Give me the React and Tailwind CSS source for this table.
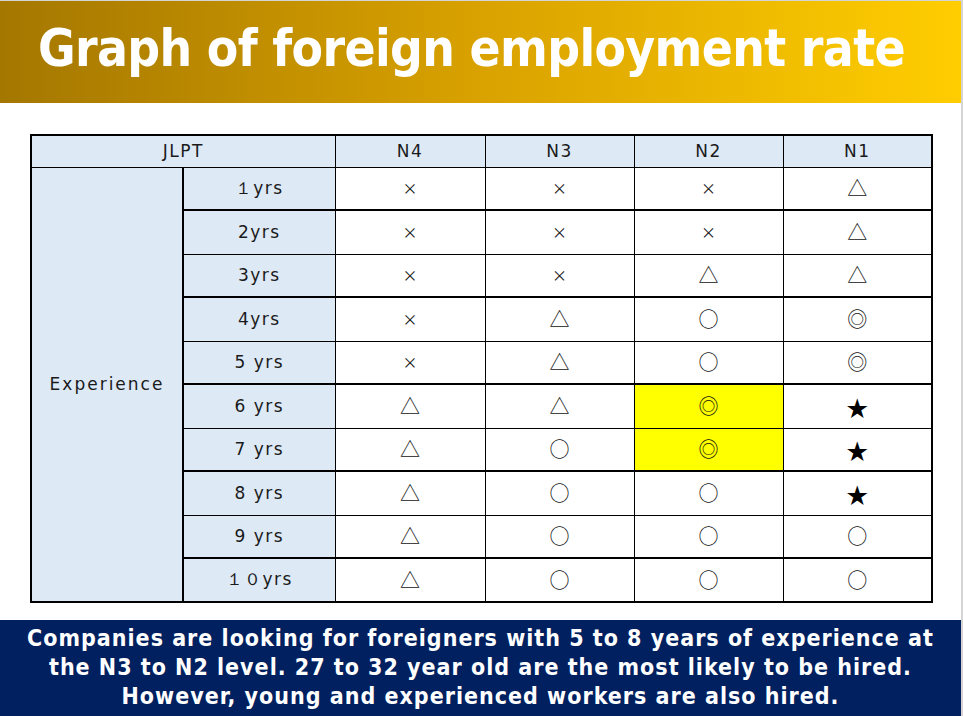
const COLS = ['N4', 'N3', 'N2', 'N1'];

const ROWS = [
  { label: '１yrs', marks: ['×', '×', '×', '△'] },
  { label: '2yrs', marks: ['×', '×', '×', '△'] },
  { label: '3yrs', marks: ['×', '×', '△', '△'] },
  { label: '4yrs', marks: ['×', '△', '○', '◎'] },
  { label: '5 yrs', marks: ['×', '△', '○', '◎'] },
  { label: '6 yrs', marks: ['△', '△', '◎', '★'], hot: 2 },
  { label: '7 yrs', marks: ['△', '○', '◎', '★'], hot: 2 },
  { label: '8 yrs', marks: ['△', '○', '○', '★'] },
  { label: '9 yrs', marks: ['△', '○', '○', '○'] },
  { label: '１０yrs', marks: ['△', '○', '○', '○'] },
];

const label = "font-['DejaVu_Sans',sans-serif] text-[17px] tracking-[1.5px] text-[#1a1a1a]";
const mark = "font-['Noto_Sans_CJK_JP',sans-serif] text-[#111]";

function Mark({ m }) {
  if (m === '×') return <span className={`${mark} text-[15px]`}>×</span>;
  if (m === '★') return <span className={`${mark} text-[22px] text-black`}>★</span>;
  return <span className={`${mark} text-[20px]`}>{m}</span>;
}

export default function App() {
  return (
    <div className="w-[963px] h-[716px] bg-white overflow-hidden flex flex-col border-t border-r-2 border-[#d4d4d4]">
      <div className="h-[102px] shrink-0 flex items-center pl-[38px] pb-[8px] bg-[linear-gradient(to_right,#a47700,#d9a200_50%,#ffcd00)]">
        <h1 className="font-['DejaVu_Sans_Condensed','DejaVu_Sans',sans-serif] font-bold text-white text-[51px] tracking-[-0.65px] leading-none">
          Graph of foreign employment rate
        </h1>
      </div>

      <div className="pt-[31px] pl-[30px]">
        <table className="border-collapse border-2 border-black table-fixed w-[901px]">
          <colgroup>
            <col className="w-[152px]" />
            <col className="w-[152px]" />
            <col className="w-[150px]" />
            <col className="w-[149px]" />
            <col className="w-[149px]" />
            <col className="w-[149px]" />
          </colgroup>
          <thead>
            <tr className="h-[32px] bg-[#dde9f5]">
              <th colSpan={2} className={`${label} font-normal border border-black text-center`}>
                JLPT
              </th>
              {COLS.map((c) => (
                <th key={c} className={`${label} font-normal border border-black text-center`}>
                  {c}
                </th>
              ))}
            </tr>
          </thead>
          <tbody>
            {ROWS.map((r, i) => {
              const thick = i % 2 === 0 ? 'border-b-2' : 'border-b';
              return (
                <tr key={r.label} className={i % 2 === 0 ? 'h-[43px]' : 'h-[44px]'}>
                  {i === 0 && (
                    <td rowSpan={10} className={`${label} tracking-[2px] bg-[#dde9f5] border border-r-2 border-black text-center`}>
                      Experience
                    </td>
                  )}
                  <td className={`${label} bg-[#dde9f5] border-x border-t border-black ${thick} text-center`}>
                    {r.label}
                  </td>
                  {r.marks.map((m, j) => (
                    <td
                      key={j}
                      className={`border-x border-t border-black ${thick} text-center ${r.hot === j ? 'bg-[#ffff00]' : 'bg-white'}`}
                    >
                      <Mark m={m} />
                    </td>
                  ))}
                </tr>
              );
            })}
          </tbody>
        </table>
      </div>

      <div className="mt-auto h-[96px] bg-[#002060] flex flex-col items-center justify-center pb-[2px]">
        <p className="font-['DejaVu_Sans_Condensed','DejaVu_Sans',sans-serif] font-bold text-white text-[23px] leading-[29px] text-center tracking-[1px]">
          Companies are looking for foreigners with 5 to 8 years of experience at
          <br />
          the N3 to N2 level. 27 to 32 year old are the most likely to be hired.
          <br />
          However, young and experienced workers are also hired.
        </p>
      </div>
    </div>
  );
}
